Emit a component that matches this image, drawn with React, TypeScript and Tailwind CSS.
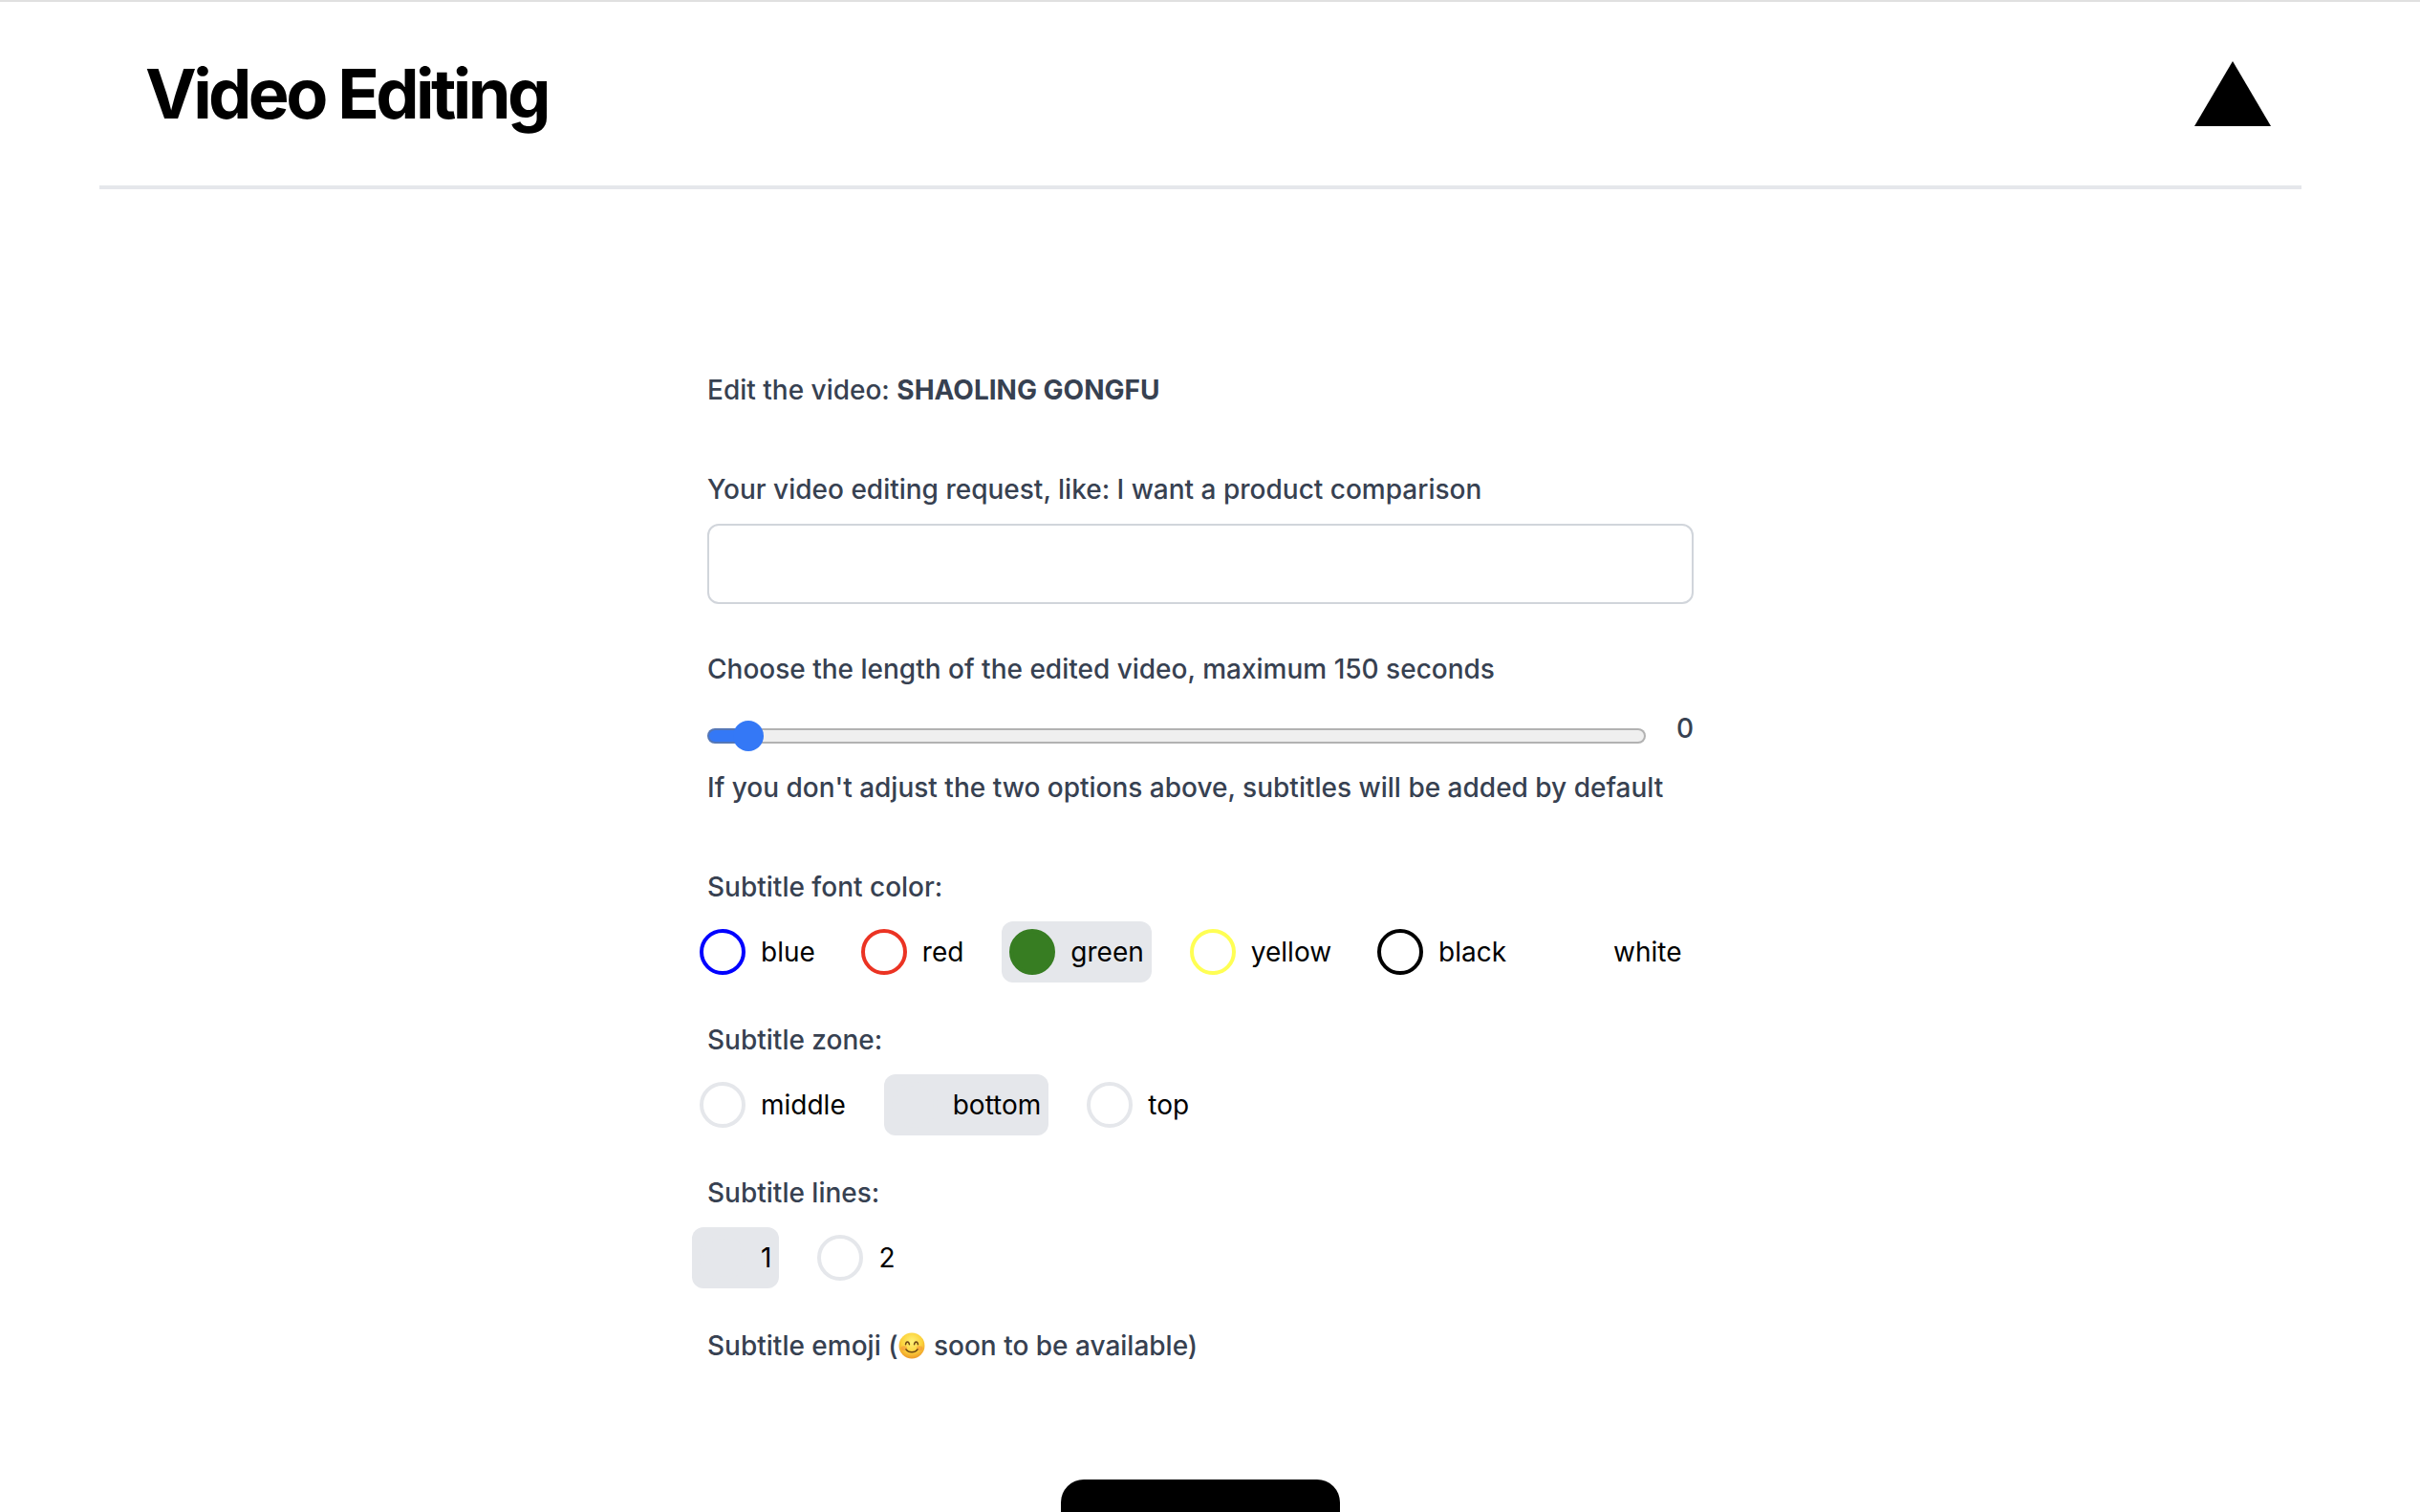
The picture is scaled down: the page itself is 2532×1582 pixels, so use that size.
import { useState } from 'react'

interface Option {
  value: string
  // Ring colour, also used as the fill when the option is checked
  ring: string
}

interface OptionGroupProps {
  name: string
  legend: string
  options: Option[]
  initial: string
}

const COLORS: Option[] = [
  { value: 'blue', ring: 'text-[#0000ff]' },
  { value: 'red', ring: 'text-[#eb3323]' },
  { value: 'green', ring: 'text-[#377d22]' },
  { value: 'yellow', ring: 'text-[#ffff54]' },
  { value: 'black', ring: 'text-black' },
  { value: 'white', ring: 'text-white' },
]

const ZONES: Option[] = [
  { value: 'middle', ring: 'text-[#e5e7eb]' },
  { value: 'bottom', ring: 'text-[#e5e7eb]' },
  { value: 'top', ring: 'text-[#e5e7eb]' },
]

const LINES: Option[] = [
  { value: '1', ring: 'text-[#e5e7eb]' },
  { value: '2', ring: 'text-[#e5e7eb]' },
]

const MAX_SECONDS = 150
const START_POSITION = 4
const THUMB = 32

function OptionGroup({ name, legend, options, initial }: OptionGroupProps) {
  const [selected, setSelected] = useState(initial)

  return (
    <fieldset className="mb-10">
      <legend className="mb-4">{legend}</legend>
      <div className="-ml-4 flex flex-wrap gap-x-8 gap-y-2">
        {options.map((option) => (
          <label
            key={option.value}
            className="flex cursor-pointer items-center gap-4 rounded-xl p-2 font-normal text-black has-checked:bg-[#e5e7eb]"
          >
            <input
              type="radio"
              name={name}
              value={option.value}
              checked={selected === option.value}
              onChange={() => setSelected(option.value)}
              className={`size-12 shrink-0 cursor-pointer appearance-none rounded-full border-4 border-current checked:bg-current ${option.ring}`}
            />
            {option.value}
          </label>
        ))}
      </div>
    </fieldset>
  )
}

function SmileEmoji() {
  return (
    <svg viewBox="0 0 26 26" className="mx-px mb-1 inline-block size-7" role="img" aria-label="smile">
      <defs>
        <radialGradient id="face" cx="0.5" cy="0.35" r="0.65">
          <stop offset="0" stopColor="#fff27a" />
          <stop offset="0.6" stopColor="#fcd33c" />
          <stop offset="1" stopColor="#ee9a28" />
        </radialGradient>
      </defs>
      <circle cx="13" cy="13" r="12.5" fill="url(#face)" />
      <ellipse cx="5.5" cy="15.5" rx="3" ry="2.2" fill="#f4803c" opacity="0.45" />
      <ellipse cx="20.5" cy="15.5" rx="3" ry="2.2" fill="#f4803c" opacity="0.45" />
      <g fill="none" stroke="#6b4413" strokeWidth="1.4" strokeLinecap="round">
        <path d="M7 11.8c.5-3.4 3-3.4 3.6 0" />
        <path d="M15.4 11.8c.6-3.4 3.1-3.4 3.6 0" />
        <path d="M7.4 16.6c2.6 3.6 8.6 3.6 11.2 0" />
      </g>
    </svg>
  )
}

export default function App() {
  const [position, setPosition] = useState(START_POSITION)
  // Stays at 0 until the slider has been moved
  const [seconds, setSeconds] = useState(0)

  const ratio = position / MAX_SECONDS
  const filled = `calc(${ratio * 100}% + ${THUMB / 2 - ratio * THUMB}px)`

  return (
    <div className="border-t-2 border-[#e0e0e0] bg-white pr-5 font-[Inter,'Liberation_Sans',sans-serif]">
      <div className="mx-auto max-w-[2304px]">
        <header className="flex items-center justify-between border-b-4 border-[#e5e7eb] py-12 pr-8 pl-12">
          <h1 className="text-[72px] leading-[96px] font-bold tracking-tighter text-black">Video Editing</h1>
          <svg viewBox="0 0 80 68" className="w-20" role="img" aria-label="Logo">
            <path d="M40 0L80 68H0z" fill="#000" />
          </svg>
        </header>

        <main className="mx-auto max-w-[1032px] pt-[190px] pb-32 text-[28px] leading-10 font-medium text-[#374151]">
          <p className="mb-16">
            Edit the video: <b className="font-bold">SHAOLING GONGFU</b>
          </p>

          <form onSubmit={(e) => e.preventDefault()}>
            <label htmlFor="request" className="mb-4 block">
              Your video editing request, like: I want a product comparison
            </label>
            <input
              id="request"
              type="text"
              className="mb-12 block h-[84px] w-full rounded-xl border-2 border-[#d1d5db] px-6"
            />

            <label htmlFor="length" className="block">
              Choose the length of the edited video, maximum {MAX_SECONDS} seconds
            </label>
            <div className="my-[22px] flex items-end gap-8">
              <input
                id="length"
                type="range"
                min={0}
                max={MAX_SECONDS}
                value={position}
                onChange={(e) => {
                  setPosition(Number(e.target.value))
                  setSeconds(Number(e.target.value))
                }}
                className="mb-1 h-4 min-w-0 grow cursor-pointer appearance-none rounded-full border-2 border-[#767676]/50 [&::-webkit-slider-thumb]:size-8 [&::-webkit-slider-thumb]:appearance-none [&::-webkit-slider-thumb]:rounded-full [&::-webkit-slider-thumb]:bg-[#3478f6]"
                style={{ background: `linear-gradient(to right, #3478f6 ${filled}, #efefef ${filled}) border-box` }}
              />
              <output htmlFor="length">{seconds}</output>
            </div>
            <p className="mb-16">
              If you don't adjust the two options above, subtitles will be added by default
            </p>

            <OptionGroup name="color" legend="Subtitle font color:" options={COLORS} initial="green" />
            <OptionGroup name="zone" legend="Subtitle zone:" options={ZONES} initial="bottom" />
            <OptionGroup name="lines" legend="Subtitle lines:" options={LINES} initial="1" />

            <p>
              Subtitle emoji (<SmileEmoji /> soon to be available)
            </p>

            <button
              type="submit"
              className="mx-auto mt-[120px] block w-[292px] rounded-3xl bg-black py-6 text-[32px] leading-[48px] text-white"
            >
              Edit video
            </button>
          </form>
        </main>
      </div>
    </div>
  )
}
